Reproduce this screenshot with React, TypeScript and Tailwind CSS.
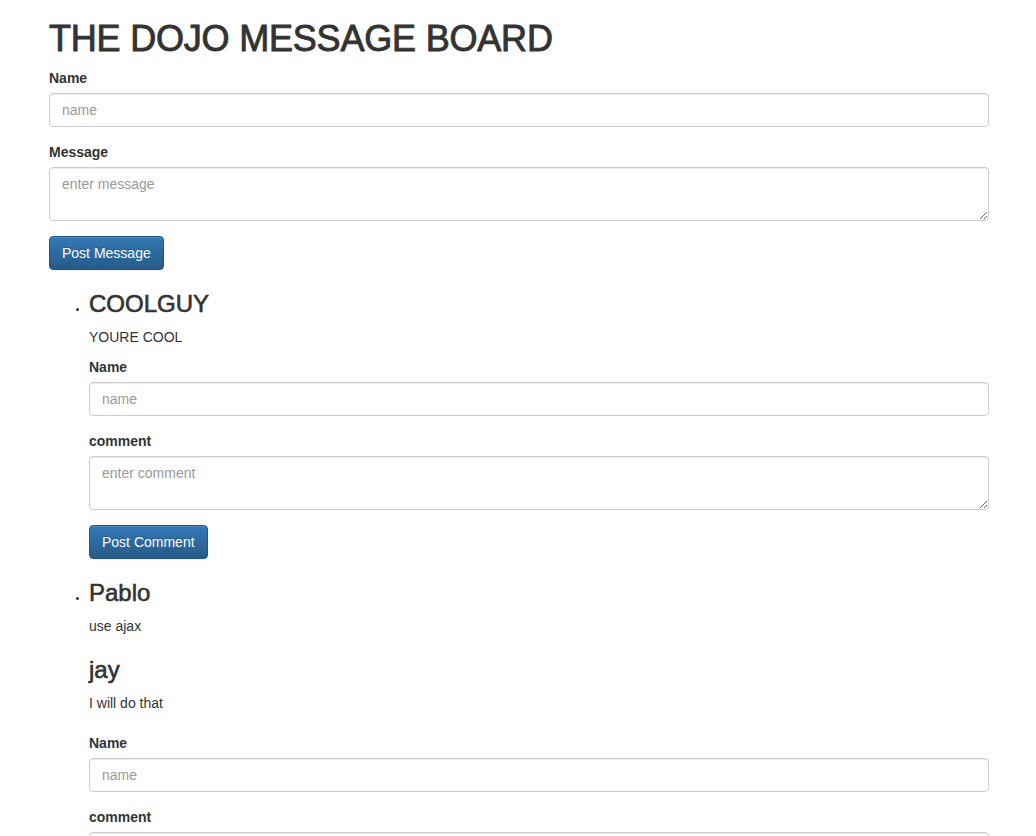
import React from "react";

const inputCls =
  "block h-[34px] w-full rounded-[4px] border border-[#ccc] bg-white px-3 py-[6px] text-sm leading-5 text-[#555] shadow-[inset_0_1px_1px_rgba(0,0,0,0.075)] placeholder:text-[#999] focus:outline-none";

const areaCls =
  "block h-[54px] w-full resize-y rounded-[4px] border border-[#ccc] bg-white px-3 py-[6px] text-sm leading-5 text-[#555] shadow-[inset_0_1px_1px_rgba(0,0,0,0.075)] placeholder:text-[#999] focus:outline-none";

const btnCls =
  "inline-block rounded-[4px] border border-[#245580] bg-linear-to-b from-[#337ab7] to-[#265a88] px-3 py-[6px] text-sm leading-5 text-white [text-shadow:0_-1px_0_rgba(0,0,0,0.2)] shadow-[inset_0_1px_0_rgba(255,255,255,0.15),0_1px_1px_rgba(0,0,0,0.075)]";

// helvetica neue medium stand-in: regular face with a thin stroke, keeps arial widths
const h3Cls =
  "mt-5 mb-[10px] text-2xl leading-[27px] font-medium [-webkit-text-stroke:0.6px_#333]";

function Field({ label, children }: { label: string; children: React.ReactNode }) {
  return (
    <div className="mb-[15px]">
      <label className="mb-[5px] block font-bold">{label}</label>
      {children}
    </div>
  );
}

function CommentForm() {
  return (
    <form>
      <Field label="Name">
        <input className={inputCls} placeholder="name" />
      </Field>
      <Field label="comment">
        <textarea className={areaCls} rows={2} placeholder="enter comment" />
      </Field>
      <button type="button" className={btnCls}>
        Post Comment
      </button>
    </form>
  );
}

export default function App() {
  return (
    <div className="min-h-screen bg-white pb-10 font-['Liberation_Sans',Arial,sans-serif] text-sm leading-5 text-[#333]">
      <div className="ml-[49px] w-[940px] pt-px">
        <h1 className="mt-[19px] mb-[10px] text-[36px] leading-[38px] font-medium tracking-[-0.2px] [-webkit-text-stroke:0.9px_#333]">
          THE DOJO MESSAGE BOARD
        </h1>

        <form>
          <Field label="Name">
            <input className={inputCls} placeholder="name" />
          </Field>
          <Field label="Message">
            <textarea className={areaCls} rows={2} placeholder="enter message" />
          </Field>
          <button type="button" className={btnCls}>
            Post Message
          </button>
        </form>

        <ul className="mb-[10px] list-disc pl-10 marker:text-[11px]">
          <li>
            <h3 className={h3Cls}>COOLGUY</h3>
            <p className="mb-[10px]">YOURE COOL</p>
            <CommentForm />
          </li>
          <li>
            <h3 className={h3Cls}>Pablo</h3>
            <p className="mb-[10px]">use ajax</p>
            <h3 className={h3Cls}>jay</h3>
            <p className="mb-[10px]">I will do that</p>
            <div className="pt-[10px]">
              <CommentForm />
            </div>
          </li>
        </ul>
      </div>
    </div>
  );
}
